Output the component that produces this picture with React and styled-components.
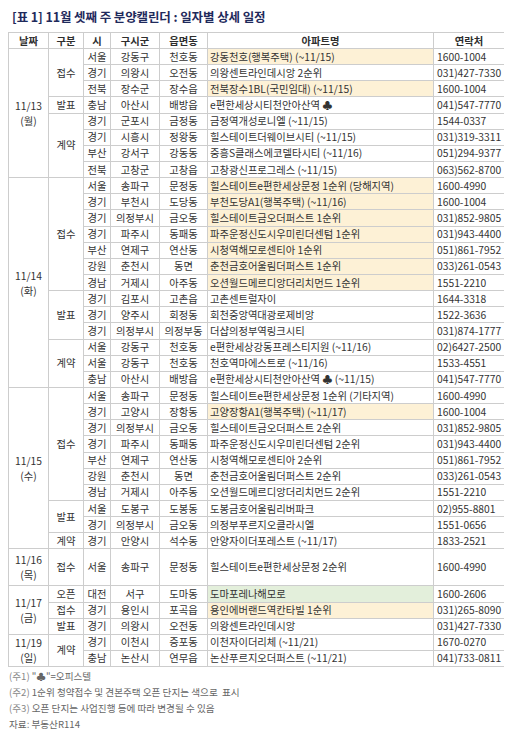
import React from 'react';
import styled, { createGlobalStyle } from 'styled-components';

const Global = createGlobalStyle`
  html, body { margin: 0; padding: 0; background: #fff; }
  body { margin: 8px; font-family: "Noto Sans CJK KR", "Noto Sans", sans-serif; color: #333; }
`;

const Title = styled.h1`
  margin: 0 0 7px 0;
  padding-left: 4px;
  font-size: 12.5px;
  line-height: 17px;
  font-weight: 700;
  color: #1f2a5c;
  letter-spacing: -0.1px;
`;

const Table = styled.table`
  width: 496px;
  table-layout: fixed;
  border-collapse: collapse;
  font-size: 10.3px;
  color: #333;
`;

const Row = styled.tr`
  height: ${(p) => (p.$tall ? '37px' : '16.15px')};
`;

const HeadRow = styled.tr`
  height: 16px;
`;

const HeadCell = styled.th`
  border: 1px solid #cdcdcd;
  font-weight: 700;
  padding: 0;
  line-height: 14px;
  text-align: center;
  color: #2e2e2e;
`;

const Cell = styled.td`
  border: 1px solid #cdcdcd;
  padding: 0 ${(p) => (p.$left ? '2px' : '0')};
  line-height: 14px;
  text-align: ${(p) => (p.$left ? 'left' : 'center')};
  white-space: nowrap;
  overflow: hidden;
  vertical-align: middle;
`;

const NameCell = styled(Cell)`
  background: ${(p) =>
    p.$hl === 'y' ? '#fdf1d6' : p.$hl === 'g' ? '#e3efdb' : '#fff'};
`;

const TelCell = styled(Cell)`
  padding-left: 3px;
`;

const DateCell = styled(Cell)`
  line-height: 15px;
  white-space: normal;
`;

const Notes = styled.div`
  margin-top: 1px;
  font-size: 9.6px;
  line-height: 16px;
  color: #666;
`;

const NoteLine = styled.div`
  padding-left: 1px;
`;

const NoteTag = styled.span`
  color: #888;
`;

const days = [
  {
    date: '11/13', wd: '월', groups: [
      { type: '접수', rows: [
        ['서울', '강동구', '천호동', '강동천호(행복주택) (~11/15)', '1600-1004', 'y'],
        ['경기', '의왕시', '오전동', '의왕센트라인데시앙 2순위', '031)427-7330'],
        ['전북', '장수군', '장수읍', '전북장수1BL(국민임대) (~11/15)', '1600-1004', 'y'],
      ] },
      { type: '발표', rows: [
        ['충남', '아산시', '배방읍', 'e편한세상시티천안아산역 ♣', '041)547-7770'],
      ] },
      { type: '계약', rows: [
        ['경기', '군포시', '금정동', '금정역개성로니엘 (~11/15)', '1544-0337'],
        ['경기', '시흥시', '정왕동', '힐스테이트더웨이브시티 (~11/15)', '031)319-3311'],
        ['부산', '강서구', '강동동', '중흥S클래스에코델타시티 (~11/16)', '051)294-9377'],
        ['전북', '고창군', '고창읍', '고창광신프로그레스 (~11/15)', '063)562-8700'],
      ] },
    ],
  },
  {
    date: '11/14', wd: '화', groups: [
      { type: '접수', rows: [
        ['서울', '송파구', '문정동', '힐스테이트e편한세상문정 1순위 (당해지역)', '1600-4990', 'y'],
        ['경기', '부천시', '도당동', '부천도당A1(행복주택) (~11/16)', '1600-1004', 'y'],
        ['경기', '의정부시', '금오동', '힐스테이트금오더퍼스트 1순위', '031)852-9805', 'y'],
        ['경기', '파주시', '동패동', '파주운정신도시우미린더센텀 1순위', '031)943-4400', 'y'],
        ['부산', '연제구', '연산동', '시청역해모로센티아 1순위', '051)861-7952', 'y'],
        ['강원', '춘천시', '동면', '춘천금호어울림더퍼스트 1순위', '033)261-0543', 'y'],
        ['경남', '거제시', '아주동', '오션월드메르디앙더리치먼드 1순위', '1551-2210', 'y'],
      ] },
      { type: '발표', rows: [
        ['경기', '김포시', '고촌읍', '고촌센트럴자이', '1644-3318'],
        ['경기', '양주시', '회정동', '회천중앙역대광로제비앙', '1522-3636'],
        ['경기', '의정부시', '의정부동', '더샵의정부역링크시티', '031)874-1777'],
      ] },
      { type: '계약', rows: [
        ['서울', '강동구', '천호동', 'e편한세상강동프레스티지원 (~11/16)', '02)6427-2500'],
        ['서울', '강동구', '천호동', '천호역마에스트로 (~11/16)', '1533-4551'],
        ['충남', '아산시', '배방읍', 'e편한세상시티천안아산역 ♣ (~11/15)', '041)547-7770'],
      ] },
    ],
  },
  {
    date: '11/15', wd: '수', groups: [
      { type: '접수', rows: [
        ['서울', '송파구', '문정동', '힐스테이트e편한세상문정 1순위 (기타지역)', '1600-4990'],
        ['경기', '고양시', '장항동', '고양장항A1(행복주택) (~11/17)', '1600-1004', 'y'],
        ['경기', '의정부시', '금오동', '힐스테이트금오더퍼스트 2순위', '031)852-9805'],
        ['경기', '파주시', '동패동', '파주운정신도시우미린더센텀 2순위', '031)943-4400'],
        ['부산', '연제구', '연산동', '시청역해모로센티아 2순위', '051)861-7952'],
        ['강원', '춘천시', '동면', '춘천금호어울림더퍼스트 2순위', '033)261-0543'],
        ['경남', '거제시', '아주동', '오션월드메르디앙더리치먼드 2순위', '1551-2210'],
      ] },
      { type: '발표', rows: [
        ['서울', '도봉구', '도봉동', '도봉금호어울림리버파크', '02)955-8801'],
        ['경기', '의정부시', '금오동', '의정부푸르지오클라시엘', '1551-0656'],
      ] },
      { type: '계약', rows: [
        ['경기', '안양시', '석수동', '안양자이더포레스트 (~11/17)', '1833-2521'],
      ] },
    ],
  },
  {
    date: '11/16', wd: '목', tall: true, groups: [
      { type: '접수', rows: [
        ['서울', '송파구', '문정동', '힐스테이트e편한세상문정 2순위', '1600-4990'],
      ] },
    ],
  },
  {
    date: '11/17', wd: '금', groups: [
      { type: '오픈', rows: [
        ['대전', '서구', '도마동', '도마포레나해모로', '1600-2606', 'g'],
      ] },
      { type: '접수', rows: [
        ['경기', '용인시', '포곡읍', '용인에버랜드역칸타빌 1순위', '031)265-8090', 'y'],
      ] },
      { type: '발표', rows: [
        ['경기', '의왕시', '오전동', '의왕센트라인데시앙', '031)427-7330'],
      ] },
    ],
  },
  {
    date: '11/19', wd: '일', groups: [
      { type: '계약', rows: [
        ['경기', '이천시', '증포동', '이천자이더리체 (~11/21)', '1670-0270'],
        ['충남', '논산시', '연무읍', '논산푸르지오더퍼스트 (~11/21)', '041)733-0811'],
      ] },
    ],
  },
];

const widths = [40, 35, 27, 49, 48, 226, 71];
const heads = ['날짜', '구분', '시', '구시군', '읍면동', '아파트명', '연락처'];

function renderRows() {
  const out = [];
  days.forEach((day) => {
    const total = day.groups.reduce((s, g) => s + g.rows.length, 0);
    let first = true;
    day.groups.forEach((g) => {
      g.rows.forEach((r, i) => {
        const [si, gu, dong, name, tel, hl] = r;
        out.push(
          <Row key={`${day.date}-${g.type}-${i}`} $tall={day.tall}>
            {first && (
              <DateCell rowSpan={total}>
                {day.date}
                <br />({day.wd})
              </DateCell>
            )}
            {i === 0 && <Cell rowSpan={g.rows.length}>{g.type}</Cell>}
            <Cell>{si}</Cell>
            <Cell>{gu}</Cell>
            <Cell>{dong}</Cell>
            <NameCell $left $hl={hl}>{name}</NameCell>
            <TelCell $left>{tel}</TelCell>
          </Row>
        );
        first = false;
      });
    });
  });
  return out;
}

export default function App() {
  return (
    <>
      <Global />
      <Title>[표 1] 11월 셋째 주 분양캘린더 : 일자별 상세 일정</Title>
      <Table>
        <colgroup>
          {widths.map((w, i) => (
            <col key={i} style={{ width: w }} />
          ))}
        </colgroup>
        <thead>
          <HeadRow>
            {heads.map((h) => (
              <HeadCell key={h}>{h}</HeadCell>
            ))}
          </HeadRow>
        </thead>
        <tbody>{renderRows()}</tbody>
      </Table>
      <Notes>
        <NoteLine><NoteTag>(주1)</NoteTag> "♣"=오피스텔</NoteLine>
        <NoteLine><NoteTag>(주2)</NoteTag> 1순위 청약접수 및 견본주택 오픈 단지는 색으로&nbsp; 표시</NoteLine>
        <NoteLine><NoteTag>(주3)</NoteTag> 오픈 단지는 사업진행 등에 따라 변경될 수 있음</NoteLine>
        <NoteLine>자료: 부동산R114</NoteLine>
      </Notes>
    </>
  );
}
